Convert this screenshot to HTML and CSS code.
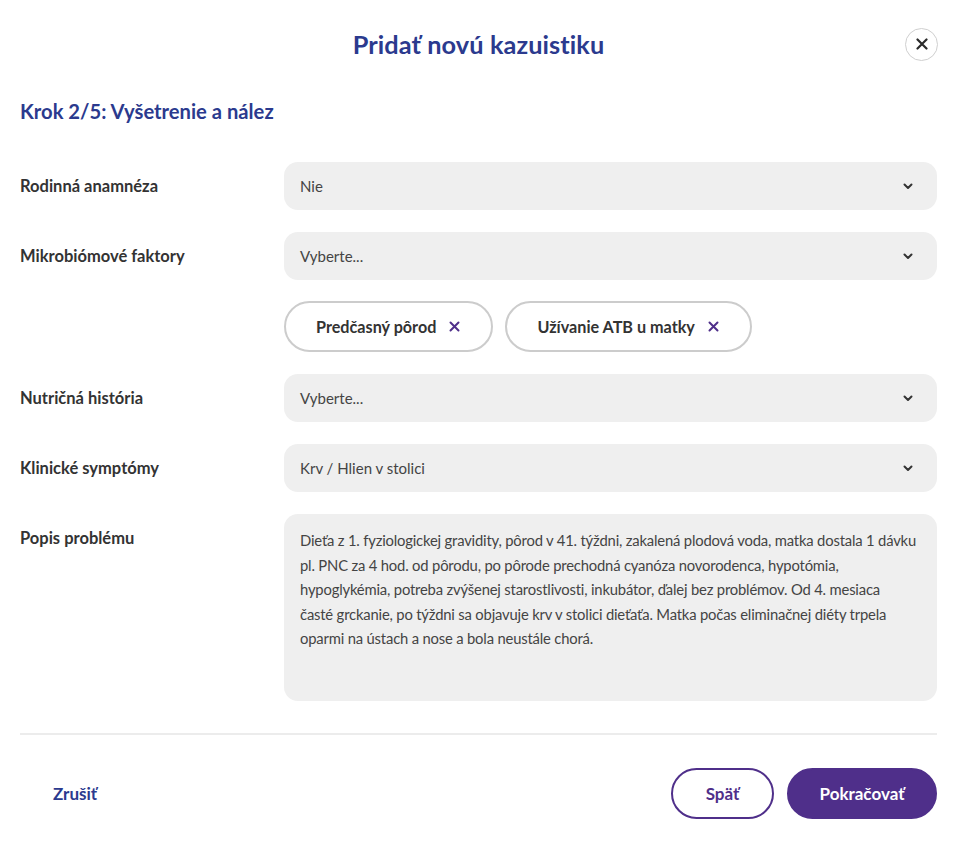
FILE: index.html
```html
<!DOCTYPE html>
<html lang="sk">
<head>
<meta charset="utf-8">
<title>Pridať novú kazuistiku</title>
<link rel="stylesheet" href="styles.css">
</head>
<body>
<div class="modal">
  <header class="modal-header">
    <span></span>
    <h1 class="modal-title">Pridať novú kazuistiku</h1>
    <button class="close-btn" aria-label="Zavrieť">
      <svg width="12" height="12" viewBox="0 0 12 12"><path d="M1.5 1.5L10.5 10.5M10.5 1.5L1.5 10.5" stroke="#2a2a2a" stroke-width="2.2" stroke-linecap="round"/></svg>
    </button>
  </header>

  <h2 class="step-title">Krok 2/5: Vyšetrenie a nález</h2>

  <div class="form">
    <div class="field-label">Rodinná anamnéza</div>
    <div class="select"><span>Nie</span><svg class="chev" width="10" height="7" viewBox="0 0 10 7"><path d="M1.5 1.5L5 5L8.5 1.5" fill="none" stroke="#333" stroke-width="2" stroke-linecap="round" stroke-linejoin="round"/></svg></div>

    <div class="field-label">Mikrobiómové faktory</div>
    <div class="select"><span>Vyberte...</span><svg class="chev" width="10" height="7" viewBox="0 0 10 7"><path d="M1.5 1.5L5 5L8.5 1.5" fill="none" stroke="#333" stroke-width="2" stroke-linecap="round" stroke-linejoin="round"/></svg></div>

    <div></div>
    <div class="chips">
      <span class="chip">Predčasný pôrod<svg width="11" height="11" viewBox="0 0 11 11"><path d="M1.5 1.5L9.5 9.5M9.5 1.5L1.5 9.5" stroke="#4f2f8a" stroke-width="2" stroke-linecap="round"/></svg></span>
      <span class="chip">Užívanie ATB u matky<svg width="11" height="11" viewBox="0 0 11 11"><path d="M1.5 1.5L9.5 9.5M9.5 1.5L1.5 9.5" stroke="#4f2f8a" stroke-width="2" stroke-linecap="round"/></svg></span>
    </div>

    <div class="field-label">Nutričná história</div>
    <div class="select"><span>Vyberte...</span><svg class="chev" width="10" height="7" viewBox="0 0 10 7"><path d="M1.5 1.5L5 5L8.5 1.5" fill="none" stroke="#333" stroke-width="2" stroke-linecap="round" stroke-linejoin="round"/></svg></div>

    <div class="field-label">Klinické symptómy</div>
    <div class="select"><span>Krv / Hlien v stolici</span><svg class="chev" width="10" height="7" viewBox="0 0 10 7"><path d="M1.5 1.5L5 5L8.5 1.5" fill="none" stroke="#333" stroke-width="2" stroke-linecap="round" stroke-linejoin="round"/></svg></div>

    <div class="field-label">Popis problému</div>
    <div class="textarea">Dieťa z 1. fyziologickej gravidity, pôrod v 41. týždni, zakalená plodová voda, matka dostala 1 dávku<br>pl. PNC za 4 hod. od pôrodu, po pôrode prechodná cyanóza novorodenca, hypotómia,<br>hypoglykémia, potreba zvýšenej starostlivosti, inkubátor, ďalej bez problémov. Od 4. mesiaca<br>časté grckanie, po týždni sa objavuje krv v stolici dieťaťa. Matka počas eliminačnej diéty trpela<br>oparmi na ústach a nose a bola neustále chorá.</div>
  </div>

  <hr class="divider">

  <footer class="modal-footer">
    <button class="link-btn">Zrušiť</button>
    <div class="actions">
      <button class="btn btn-outline">Späť</button>
      <button class="btn btn-primary">Pokračovať</button>
    </div>
  </footer>
</div>
</body>
</html>
```

FILE: styles.css
```css
* { box-sizing: border-box; }
html, body { margin: 0; background: #fff; }
body {
  font-family: Lato, "Noto Sans", sans-serif;
  color: #333;
}
.modal {
  padding: 0 22px 25px 20px;
}
.modal-header {
  height: 88px;
  display: grid;
  grid-template-columns: 1fr auto 1fr;
  align-items: center;
}
.modal-title {
  margin: 0;
  font-size: 25.3px;
  font-weight: 700;
  color: #2b3a8e;
  letter-spacing: 0.1px;
}
.close-btn {
  justify-self: end;
  width: 33px;
  height: 33px;
  border-radius: 50%;
  border: 1px solid #cfcfcf;
  background: #fff;
  display: flex;
  align-items: center;
  justify-content: center;
  padding: 0;
  margin-right: -1px;
}
.step-title {
  margin: 11px 0 39px;
  font-size: 20.2px;
  line-height: 24px;
  font-weight: 700;
  color: #2b3a8e;
}
.form {
  display: grid;
  grid-template-columns: 264px 1fr;
  row-gap: 22px;
  align-items: start;
}
.field-label {
  font-size: 16.5px;
  font-weight: 700;
  line-height: 48px;
  color: #333;
}
.select {
  height: 48px;
  border-radius: 14px;
  background: #efefef;
  display: flex;
  align-items: center;
  justify-content: space-between;
  padding: 0 24px 0 16px;
  font-size: 15px;
  color: #444;
}
.chev { display: block; }
.chips {
  display: flex;
  gap: 12px;
  margin-top: -1px;
}
.chip {
  height: 51px;
  border: 2px solid #cccccc;
  border-radius: 26px;
  display: inline-flex;
  align-items: center;
  gap: 13px;
  padding: 0 31px 0 30px;
  font-size: 16.2px;
  font-weight: 700;
  color: #333;
  background: #fff;
}
.textarea {
  height: 187px;
  border-radius: 14px;
  background: #efefef;
  padding: 14px 10px 14px 16px;
  font-size: 14.8px;
  line-height: 24.5px;
  letter-spacing: -0.18px;
  color: #444;
}
.divider {
  border: 0;
  border-top: 2px solid #ececec;
  margin: 32px 0 33px;
}
.modal-footer {
  display: flex;
  justify-content: space-between;
  align-items: center;
}
.link-btn {
  background: none;
  border: 0;
  font-family: inherit;
  font-size: 17px;
  font-weight: 700;
  color: #2b3a8e;
  padding: 0 0 0 33px;
}
.actions {
  display: flex;
  gap: 13px;
}
.btn {
  height: 51px;
  border-radius: 26px;
  font-family: inherit;
  font-size: 17px;
  font-weight: 700;
  padding: 0;
}
.btn-outline {
  width: 103px;
  background: #fff;
  border: 2px solid #4f2f8a;
  color: #4f2f8a;
}
.btn-primary {
  width: 150px;
  background: #4f2f8a;
  border: 2px solid #4f2f8a;
  color: #fff;
}
```
